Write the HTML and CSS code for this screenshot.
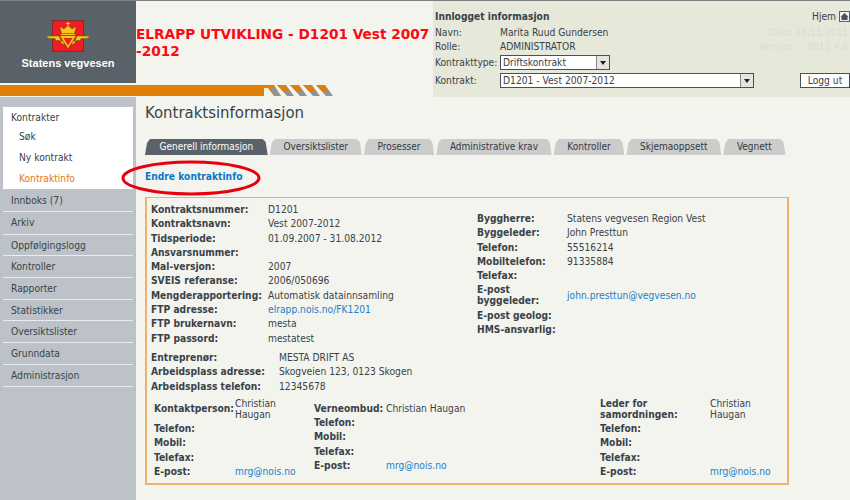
FILE: index.html
```html
<!DOCTYPE html>
<html lang="en">

<head>
    <meta charset="UTF-8">
    <meta name="viewport" content="width=device-width, initial-scale=1.0">
    <title>Kontraktsinformasjon</title>
    <link rel="stylesheet" href="styles.css">
</head>

<body>
    <header class="top">
        <div class="brand-col">
            <div class="brand-row">
                <div class="logo">
                    <svg class="logo-mark" width="66" height="32" viewBox="0 0 66 32">
                        <rect x="17.500" y="0.500" width="31" height="31" fill="#ee1c25" stroke="#6a2020" stroke-width="0.6"/>
                        <path d="M33 2v4M31 3.500h4" stroke="#f5c518" stroke-width="1.200"/>
                        <path d="M25 6.500l4 2.500 4-3.500 4 3.500 4-2.500-1.500 7h-13z" fill="#f5c518" stroke="#7a5a10" stroke-width="0.500"/>
                        <path d="M26 14.500h14" stroke="#f5c518" stroke-width="1.200"/>
                        <path d="M11 16h13l2 5h14l2-5h13l-3 2.500h-6l-1 2h-4l-2 3.500H27l-2-3.500h-4l-1-2h-6z" fill="#f5c518" stroke="#6b5a10" stroke-width="0.500"/>
                        <path d="M24.500 15.500h17L33 29z" fill="#f5c518" stroke="#5a1a1a" stroke-width="0.500"/>
                        <path d="M28.500 18h9L33 25.500z" fill="#ee1c25"/>
                    </svg>
                    <div class="logo-text">Statens vegvesen</div>
                </div>
                <h1 class="env-title">ELRAPP UTVIKLING - D1201 Vest 2007<br>-2012</h1>
            </div>
            <div class="stripe-row">
                <div class="stripe"></div>
                <svg class="stripe-ticks" width="70" height="13" viewBox="0 0 70 13">
                    <polygon points="0,1 10,1 17,12 10,12 4,4 0,4" fill="#e07f06"/>
                    <polygon points="6,5 10,3 17,12 11,12" fill="#8f9496"/>
                    <polygon points="13,1 22,1 30,12 23,12" fill="#8f9496"/>
                    <polygon points="13,1 21,1 26,8 20,8" fill="#e07f06"/>
                    <polygon points="26,1 35,1 43,12 36,12" fill="#8f9496"/>
                    <polygon points="26,1 34,1 39,8 33,8" fill="#e07f06"/>
                    <polygon points="39,1 48,1 56,12 49,12" fill="#8f9496"/>
                    <polygon points="39,1 47,1 52,8 46,8" fill="#e07f06"/>
                    <polygon points="52,1 61,1 69,12 62,12" fill="#8f9496"/>
                    <polygon points="52,1 60,1 65,8 59,8" fill="#e07f06"/>
                </svg>
            </div>
        </div>

        <div class="session">
            <div class="session-head">
                <strong>Innlogget informasjon</strong>
                <span class="home">Hjem
                    <svg width="11" height="11" viewBox="0 0 11 11">
                        <rect x="0.500" y="0.500" width="10" height="10" fill="#eef0f2" stroke="#5a6269"/>
                        <path d="M5.500 2L9.500 6H8.500V9H2.500V6H1.500z" fill="#4a5259"/>
                    </svg>
                </span>
            </div>
            <div class="session-row">
                <span class="session-label">Navn:</span>
                <span class="session-value">Marita Ruud Gundersen</span>
                <span class="session-faint">Dato: 28.11.2011</span>
            </div>
            <div class="session-row">
                <span class="session-label">Rolle:</span>
                <span class="session-value">ADMINISTRATOR</span>
                <span class="session-faint">Versjon: &nbsp; &nbsp;2011.4.0</span>
            </div>
            <div class="session-row session-row-select">
                <span class="session-label">Kontrakttype:</span>
                <div class="select select-short">Driftskontrakt<span class="select-arrow"></span></div>
            </div>
            <div class="session-row session-row-select">
                <span class="session-label">Kontrakt:</span>
                <div class="select select-long">D1201 - Vest 2007-2012<span class="select-arrow"></span></div>
                <button class="logout">Logg ut</button>
            </div>
        </div>
    </header>

    <div class="layout">
        <nav class="side">
            <div class="side-open">
                <a class="side-head">Kontrakter</a>
                <a class="side-sub">Søk</a>
                <a class="side-sub">Ny kontrakt</a>
                <a class="side-sub side-current">Kontraktinfo</a>
            </div>
            <a class="side-item">Innboks (7)</a>
            <a class="side-item side-item-tall">Arkiv</a>
            <a class="side-item">Oppfølgingslogg</a>
            <a class="side-item">Kontroller</a>
            <a class="side-item">Rapporter</a>
            <a class="side-item">Statistikker</a>
            <a class="side-item">Oversiktslister</a>
            <a class="side-item">Grunndata</a>
            <a class="side-item">Administrasjon</a>
        </nav>

        <main class="content">
            <h2 class="page-title">Kontraktsinformasjon</h2>

            <div class="tabs">
                <a class="tab tab-active">Generell informasjon</a>
                <a class="tab">Oversiktslister</a>
                <a class="tab">Prosesser</a>
                <a class="tab">Administrative krav</a>
                <a class="tab">Kontroller</a>
                <a class="tab">Skjemaoppsett</a>
                <a class="tab">Vegnett</a>
            </div>

            <div class="actions">
                <a class="action-link">Endre kontraktinfo</a>
                <svg class="circle" width="142" height="38" viewBox="0 0 142 38">
                    <ellipse cx="71" cy="19" rx="68" ry="16" fill="none" stroke="#e8000f" stroke-width="3"/>
                </svg>
            </div>

            <section class="card">
                <div class="card-top">
                    <div class="card-left">
                        <dl class="facts facts-main">
                            <dt>Kontraktsnummer:</dt><dd>D1201</dd>
                            <dt>Kontraktsnavn:</dt><dd>Vest 2007-2012</dd>
                            <dt>Tidsperiode:</dt><dd>01.09.2007 - 31.08.2012</dd>
                            <dt>Ansvarsnummer:</dt><dd></dd>
                            <dt>Mal-versjon:</dt><dd>2007</dd>
                            <dt>SVEIS referanse:</dt><dd>2006/050696</dd>
                            <dt>Mengderapportering:</dt><dd>Automatisk datainnsamling</dd>
                            <dt>FTP adresse:</dt><dd><a>elrapp.nois.no/FK1201</a></dd>
                            <dt>FTP brukernavn:</dt><dd>mesta</dd>
                            <dt>FTP passord:</dt><dd>mestatest</dd>
                        </dl>
                        <dl class="facts facts-work">
                            <dt>Entreprenør:</dt><dd>MESTA DRIFT AS</dd>
                            <dt>Arbeidsplass adresse:</dt><dd>Skogveien 123, 0123 Skogen</dd>
                            <dt>Arbeidsplass telefon:</dt><dd>12345678</dd>
                        </dl>
                    </div>
                    <dl class="facts facts-owner">
                        <dt>Byggherre:</dt><dd>Statens vegvesen Region Vest</dd>
                        <dt>Byggeleder:</dt><dd>John Presttun</dd>
                        <dt>Telefon:</dt><dd>55516214</dd>
                        <dt>Mobiltelefon:</dt><dd>91335884</dd>
                        <dt>Telefax:</dt><dd></dd>
                        <dt>E-post<br>byggeleder:</dt><dd><a>john.presttun@vegvesen.no</a></dd>
                        <dt>E-post geolog:</dt><dd></dd>
                        <dt>HMS-ansvarlig:</dt><dd></dd>
                    </dl>
                </div>
                <div class="contacts">
                    <dl class="facts contact contact-a">
                        <dt>Kontaktperson:</dt><dd>Christian<br>Haugan</dd>
                        <dt>Telefon:</dt><dd></dd>
                        <dt>Mobil:</dt><dd></dd>
                        <dt>Telefax:</dt><dd></dd>
                        <dt>E-post:</dt><dd><a>mrg@nois.no</a></dd>
                    </dl>
                    <dl class="facts contact contact-b">
                        <dt>Verneombud:</dt><dd>Christian Haugan</dd>
                        <dt>Telefon:</dt><dd></dd>
                        <dt>Mobil:</dt><dd></dd>
                        <dt>Telefax:</dt><dd></dd>
                        <dt>E-post:</dt><dd><a>mrg@nois.no</a></dd>
                    </dl>
                    <dl class="facts contact contact-c">
                        <dt>Leder for<br>samordningen:</dt><dd>Christian<br>Haugan</dd>
                        <dt>Telefon:</dt><dd></dd>
                        <dt>Mobil:</dt><dd></dd>
                        <dt>Telefax:</dt><dd></dd>
                        <dt>E-post:</dt><dd><a>mrg@nois.no</a></dd>
                    </dl>
                </div>
            </section>
        </main>
    </div>
</body>

</html>
```

FILE: styles.css
```css
* {
    box-sizing: border-box;
}

html,
body {
    margin: 0;
    height: 500px;
    overflow: hidden;
}

body {
    background: #f3f4ee;
    color: #3a4249;
    font-family: "DejaVu Sans Condensed", "DejaVu Sans", Verdana, sans-serif;
    font-stretch: condensed;
    font-size: 10.2px;
    border-top: 1px solid #7d8083;
}

/* header */
.top {
    display: flex;
    height: 96px;
}

.brand-col {
    width: 433px;
}

.brand-row {
    display: flex;
    height: 82px;
}

.logo {
    width: 136px;
    flex-shrink: 0;
    background: #5a6269;
    padding-top: 19px;
    text-align: center;
}

.logo-mark {
    display: block;
    margin: 0 auto;
}

.logo-text {
    margin-top: 5px;
    color: #fff;
    font-family: "Liberation Sans", Arial, sans-serif;
    font-stretch: normal;
    font-weight: bold;
    font-size: 11px;
}

.env-title {
    margin: 25px 0 0;
    flex: 1;
    color: #fb0a14;
    font-family: "DejaVu Sans", Verdana, sans-serif;
    font-stretch: normal;
    font-size: 13.700px;
    line-height: 17px;
    font-weight: bold;
    white-space: nowrap;
}

.stripe-row {
    display: flex;
    margin-top: 1px;
    height: 13px;
    align-items: center;
}

.stripe {
    width: 264px;
    height: 11px;
    background: #e07f06;
}

.session {
    flex: 1;
    background: #e6e8da;
    padding: 9px 0 0 2px;
}

.session-head {
    display: flex;
    justify-content: space-between;
    align-items: center;
    height: 13px;
    margin-bottom: 2px;
}

.home {
    display: flex;
    align-items: center;
    gap: 3px;
}

.session-row {
    display: flex;
    height: 14px;
    align-items: center;
}

.session-row-select {
    height: 18px;
}

.session-label {
    width: 65px;
    flex-shrink: 0;
}

.session-value {
    flex: 1;
}

.session-faint {
    color: #dcdccf;
    margin-right: 2px;
}

.select {
    position: relative;
    height: 15px;
    line-height: 13px;
    background: #fff;
    border: 1px solid #4a5056;
    padding-left: 2px;
}

.select-short {
    width: 110px;
}

.select-long {
    width: 254px;
}

.select-arrow {
    position: absolute;
    right: 0;
    top: 0;
    width: 13px;
    height: 13px;
    background: #e4e4e0;
    border-left: 1px solid #888;
}

.select-arrow::after {
    content: "";
    position: absolute;
    left: 3px;
    top: 5px;
    border: 3px solid transparent;
    border-top: 4px solid #222;
    border-bottom: 0;
}

.logout {
    margin-left: auto;
    width: 50px;
    height: 15px;
    padding: 0;
    background: #fff;
    border: 1px solid #4a5056;
    color: #3a4249;
    font: inherit;
}

/* sidebar and content */
.layout {
    display: flex;
    height: 403px;
}

.side {
    width: 136px;
    flex-shrink: 0;
    background: #bcc2c7;
    padding: 10px 3px 0;
}

.side a {
    display: block;
}

.side-open {
    background: #fff;
    height: 82px;
    margin-bottom: 1px;
    padding: 3px 0 0 8px;
}

.side-head {
    height: 17px;
    line-height: 16px;
}

.side-sub {
    height: 21px;
    line-height: 20px;
    margin-left: 8px;
}

.side-current {
    color: #e07a1e;
}

.side-item {
    height: 21.700px;
    line-height: 21px;
    padding-left: 8px;
    border-bottom: 1.500px solid #e9ebec;
}

.side-item-tall {
    height: 23px;
    line-height: 22px;
}

.content {
    flex: 1;
    padding: 5px 0 0 9px;
}

.page-title {
    margin: 0;
    font-size: 16.600px;
    line-height: 22px;
    font-weight: normal;
}

.tabs {
    display: flex;
    gap: 2px;
    margin-top: 15px;
    height: 16px;
}

.tab {
    display: block;
    background: #cbcccb;
    clip-path: polygon(0 100%, 2px 4px, 5px 0, calc(100% - 5px) 0, calc(100% - 2px) 3px, 100% 100%);
    padding: 0 13.700px;
    line-height: 16px;
    font-size: 10px;
    color: #333a40;
}

.tab-active {
    background: #5a6269;
    color: #fff;
    padding: 0 14.500px;
}

.actions {
    position: relative;
    height: 42px;
    padding-top: 16px;
}

.action-link {
    color: #0b78c8;
    font-weight: bold;
}

.circle {
    position: absolute;
    left: -25px;
    top: 4px;
}

.card {
    width: 644px;
    height: 288px;
    border: 2px solid #efb06a;
    border-top-width: 1.500px;
    padding: 5px 0 0 4px;
}

.card-top {
    display: flex;
    align-items: flex-start;
}

.card-left {
    width: 326px;
}

.facts {
    display: grid;
    margin: 0;
    line-height: 14.300px;
}

.facts dt {
    font-weight: bold;
}

.facts dd {
    margin: 0;
}

.facts a {
    color: #2080c8;
}

.facts-main {
    grid-template-columns: 117px 1fr;
}

.facts-work {
    grid-template-columns: 128px 1fr;
    margin-top: 5px;
}

.facts-owner {
    grid-template-columns: 90px 1fr;
    margin-top: 10px;
    align-items: center;
    width: 300px;
    line-height: 11px;
    row-gap: 3.300px;
}

.contacts {
    display: flex;
    margin: 4px 0 0 3px;
}

.contact {
    line-height: 11px;
    row-gap: 3.300px;
    align-items: center;
}

.contact-a {
    width: 160px;
    grid-template-columns: 81px 1fr;
}

.contact-b {
    width: 286px;
    grid-template-columns: 72px 1fr;
    align-content: start;
    margin-top: 5px;
}

.contact-c {
    width: 170px;
    grid-template-columns: 110px 1fr;
}
```
